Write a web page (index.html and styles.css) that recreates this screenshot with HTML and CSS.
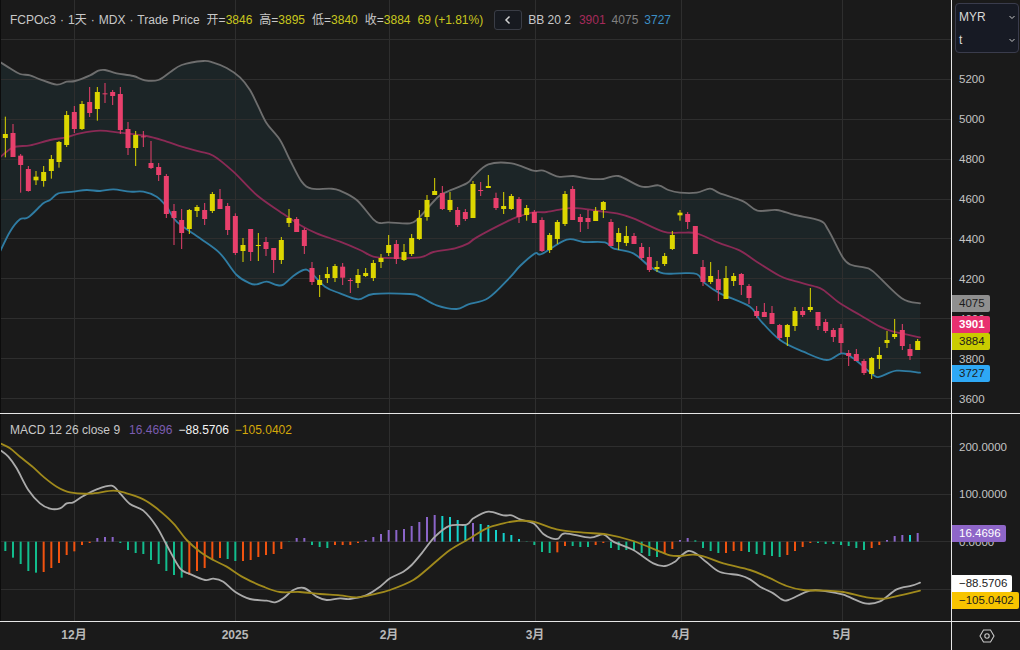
FILE: index.html
```html
<!DOCTYPE html>
<html lang="zh">
<head>
<meta charset="utf-8">
<title>FCPOc3</title>
<link rel="stylesheet" href="styles.css">
</head>
<body>
<div class="app">
  <section class="pane pane-main">
    <svg id="mainChart" class="plot" viewBox="0 0 2853 1239"></svg>
    <div class="legend">
      <span class="name wide">FCPOc3 · 1天 · MDX · Trade Price</span>
      <span class="kv"><span>开=</span><b class="up">3846</b></span>
      <span class="kv"><span>高=</span><b class="up">3895</b></span>
      <span class="kv"><span>低=</span><b class="up">3840</b></span>
      <span class="kv"><span>收=</span><b class="up">3884</b></span>
      <span class="up change">69 (+1.81%)</span>
      <button class="collapse" type="button" aria-label="折叠">
        <svg viewBox="0 0 10 10" width="10" height="10"><polyline points="6.5,1.5 3,5 6.5,8.5"/></svg>
      </button>
      <span class="name bb">BB 20 2</span>
      <span class="bb-mid">3901</span>
      <span class="bb-up">4075</span>
      <span class="bb-low">3727</span>
    </div>
  </section>
  <aside class="axis axis-main">
    <div class="selector">
      <div class="sel-row"><span>MYR</span><svg viewBox="0 0 8 8" width="8" height="8"><polyline points="1.5,3 4,5.5 6.5,3"/></svg></div>
      <div class="sel-row"><span>t</span><svg viewBox="0 0 8 8" width="8" height="8"><polyline points="1.5,3 4,5.5 6.5,3"/></svg></div>
    </div>
    <span class="tick" style="top:79px">5200</span>
    <span class="tick" style="top:119px">5000</span>
    <span class="tick" style="top:159px">4800</span>
    <span class="tick" style="top:199px">4600</span>
    <span class="tick" style="top:239px">4400</span>
    <span class="tick" style="top:279px">4200</span>
    <span class="tick" style="top:319px">4000</span>
    <span class="tick" style="top:359px">3800</span>
    <span class="tick" style="top:399px">3600</span>
    <span class="tag tag-gray" style="top:295px">4075</span>
    <span class="tag tag-pink" style="top:316px">3901</span>
    <span class="tag tag-lime" style="top:333px">3884</span>
    <span class="tag tag-blue" style="top:365px">3727</span>
  </aside>
  <section class="pane pane-macd">
    <svg id="macdChart" class="plot" viewBox="0 12 2853 621"></svg>
    <div class="legend legend-macd">
      <span class="name">MACD 12 26 close 9</span>
      <span class="m-hist">16.4696</span>
      <span class="m-line">−88.5706</span>
      <span class="m-sig">−105.0402</span>
    </div>
  </section>
  <aside class="axis axis-macd">
    <span class="tick" style="top:33px">200.0000</span>
    <span class="tick" style="top:80px">100.0000</span>
    <span class="tick" style="top:128px">0.0000</span>
    <span class="tag tag-purple" style="top:111px">16.4696</span>
    <span class="tag tag-white" style="top:161px">−88.5706</span>
    <span class="tag tag-amber" style="top:178px">−105.0402</span>
  </aside>
  <footer class="time">
    <span class="date" style="left:74px">12月</span>
    <span class="date" style="left:235px">2025</span>
    <span class="date" style="left:389px">2月</span>
    <span class="date" style="left:535px">3月</span>
    <span class="date" style="left:681px">4月</span>
    <span class="date" style="left:842px">5月</span>
  </footer>
  <div class="corner">
    <svg viewBox="0 0 16 14" width="16" height="14"><polygon points="1,7 4.5,1 11.5,1 15,7 11.5,13 4.5,13"/><circle cx="8" cy="7" r="2.2"/></svg>
  </div>
</div>
<script src="chart.js"></script>
</body>
</html>
```
FILE: styles.css
```css
* { box-sizing: border-box; }
html, body { margin: 0; height: 100%; background: #1a1a1a; overflow: hidden; }
body { font: 12px "Liberation Sans", "Noto Sans CJK SC", sans-serif; color: #c8c8c8; }
.app {
  display: grid;
  grid-template-columns: 952px 68px;
  grid-template-rows: 414px 208px 28px;
  width: 1020px;
  height: 650px;
}
.pane { position: relative; border-right: 1px solid #e6e6e6; border-bottom: 1px solid #e6e6e6; }
.plot { display: block; width: 951px; height: 100%; }
.axis { position: relative; border-bottom: 1px solid #e6e6e6; }
.tick {
  position: absolute; left: 7px;
  transform: translateY(-50%);
  font-size: 11.5px; line-height: 14px; color: #c4c4c4;
}
.tag {
  position: absolute; left: 0;
  height: 17px; line-height: 17px;
  padding: 0 5px 0 7px;
  border-radius: 0 2px 2px 0;
  font-size: 11.5px; color: #1c1c1c;
}
.tag-gray { background: #8f8f8f; width: 38px; }
.tag-pink { background: #e8306f; width: 38px; color: #fff; font-weight: 700; }
.tag-lime { background: #c9cc00; width: 38px; }
.tag-blue { background: #2ea8f5; width: 38px; }
.tag-purple { background: #8e66c8; color: #fff; }
.tag-white { background: #fff; }
.tag-amber { background: #f7c400; }
.selector {
  position: absolute; left: 3px; top: 3px;
  width: 64px; height: 50px;
  padding: 1px 2px 1px 3px;
  border: 1px solid #3a3c4c; border-radius: 4px;
  background: #171a24;
  display: flex; flex-direction: column; justify-content: space-around;
  color: #d8d8d8;
}
.sel-row { display: flex; align-items: center; justify-content: space-between; }
.sel-row svg polyline { fill: none; stroke: #c8c8c8; stroke-width: 1; }
.legend {
  position: absolute; left: 10px; top: 11px;
  display: flex; align-items: center; gap: 7px;
  height: 18px; white-space: nowrap;
  line-height: 18px;
}
.legend-macd { top: 7px; gap: 6px; }
.name.wide { word-spacing: 0.7px; }
.kv { display: flex; }
.kv b { font-weight: 400; }
.up { color: #c9c71e; }
.collapse {
  width: 28px; height: 20px; padding: 0;
  margin: 0 -1px 0 4px;
  display: flex; align-items: center; justify-content: center;
  background: #171a20; border: 1px solid #3a3d46; border-radius: 3px;
}
.collapse polyline { fill: none; stroke: #d0d0d0; stroke-width: 1.5; }
.bb-mid { color: #a62a5a; margin-left: 1px; }
.bb-up { color: #808080; margin-left: -1px; }
.bb-low { color: #3c8fc4; margin-left: -1px; }
.m-hist { color: #7a5cb0; margin-left: 3px; }
.m-line { color: #f4f4f4; }
.m-sig { color: #d4a80a; }
.time { position: relative; border-right: 1px solid #e6e6e6; }
.date { position: absolute; top: 13px; transform: translate(-50%, -50%); line-height: 16px; font-weight: 700; color: #b8b8b8; }
.corner { display: flex; align-items: center; justify-content: center; padding-left: 2px; }
.corner svg * { fill: none; stroke: #c8c8c8; stroke-width: 1.1; }
.grid { stroke: #2e2e2e; stroke-width: 3; fill: none; }
.band { fill: #1c2527; stroke: none; }
.edge { fill: #0c0c0c; }
.ln { fill: none; stroke-width: 5.5; stroke-linejoin: round; stroke-linecap: round; }
.ln-up { stroke: #6e6e6e; }
.ln-mid { stroke: #8a2a55; }
.ln-low { stroke: #2f7ca3; }
.ln-macd { stroke: #ababab; }
.ln-sig { stroke: #a08a1c; }
```
FILE: chart.js
```js
// All chart coordinates are in thirds of a pixel.
const NS = "http://www.w3.org/2000/svg";
const R = "#e8406c", Y = "#dcd600";
const candles = [
[Y,402,414,350,472],[R,399,471,372,471],[R,467,495,462,578],[R,507,573,498,575],[Y,530,541,513,555],[Y,516,543,498,560],[Y,477,513,465,536],[Y,426,486,423,503],[Y,345,435,333,441],[R,336,387,318,399],
[Y,312,387,303,390],[R,306,339,261,351],[Y,276,327,261,362],[R,280,282,249,309],[R,276,288,270,315],[R,282,390,261,402],[R,387,444,366,465],[Y,405,444,393,498],[R,409,411,393,441],[R,489,504,423,507],
[R,501,525,489,543],[R,528,642,522,654],[R,633,654,612,735],[R,660,699,627,747],[Y,630,687,627,702],[Y,621,633,615,651],[R,630,657,609,675],[Y,582,633,576,639],[R,597,627,567,627],[R,618,690,609,705],
[R,648,759,640,765],[Y,735,753,714,786],[R,687,756,687,783],[Y,735,737,699,783],[R,726,747,711,768],[R,744,780,744,819],[Y,720,780,711,792],[Y,654,669,627,681],[R,657,696,651,696],[R,690,738,684,762],
[R,804,846,786,855],[Y,840,855,825,891],[Y,822,834,801,849],[Y,798,834,792,846],[R,800,833,789,855],[R,840,842,834,879],[Y,825,849,807,864],[Y,819,828,804,831],[Y,789,834,780,843],[Y,774,786,762,804],
[Y,735,759,705,768],[R,732,777,720,792],[Y,756,780,732,783],[Y,714,762,702,768],[Y,654,717,630,720],[Y,600,651,585,662],[Y,573,585,534,585],[R,579,627,558,630],[Y,600,630,576,636],[R,630,675,621,681],
[R,636,657,627,663],[Y,552,654,543,654],[R,570,572,546,588],[Y,558,564,525,564],[R,594,624,578,630],[Y,618,627,576,642],[Y,588,627,582,630],[R,597,651,591,669],[Y,624,645,615,662],[R,636,669,630,669],
[R,660,753,652,756],[Y,705,750,699,759],[Y,666,717,660,732],[Y,582,672,573,678],[R,567,660,558,660],[R,651,666,642,696],[R,654,666,630,687],[Y,633,663,621,663],[Y,606,630,603,654],[R,666,738,657,738],
[Y,699,726,684,750],[Y,708,729,678,738],[R,708,732,699,732],[R,741,774,729,780],[R,771,810,741,816],[Y,801,807,783,816],[Y,768,792,759,798],[Y,705,747,693,750],[Y,638,646,630,662],[R,642,666,636,687],
[R,678,762,678,762],[R,801,846,780,858],[Y,828,846,786,852],[R,837,870,810,903],[Y,834,897,798,897],[Y,828,843,819,858],[R,822,855,819,885],[R,858,894,852,912],[R,933,948,918,954],[R,936,951,909,951],
[R,939,972,918,972],[R,975,1014,972,1020],[Y,975,1011,972,1038],[Y,933,978,921,993],[R,933,945,921,951],[Y,921,930,864,936],[R,936,978,936,990],[R,966,993,957,999],[R,990,1011,984,1026],[R,984,1029,972,1059],
[R,1059,1068,1050,1098],[R,1062,1083,1047,1083],[R,1083,1119,1077,1125],[Y,1074,1122,1071,1137],[Y,1065,1077,1041,1107],[Y,1020,1029,993,1044],[Y,1002,1011,957,1017],[R,990,1038,972,1050],[R,1047,1068,1032,1080],[Y,1023,1050,1017,1050]
];
const upper = [[0,186],[30,205],[60,222],[90,226],[120,238],[170,254],[200,245],[225,243],[270,226],[295,212],[315,210],[350,220],[400,228],[435,241],[475,240],[510,217],[545,195],[610,183],[640,188],[680,204],[720,232],[750,270],[775,320],[800,370],[840,420],[870,480],[905,545],[935,566],[990,566],[1020,572],[1070,600],[1120,658],[1140,669],[1165,667],[1230,670],[1255,655],[1305,600],[1330,580],[1400,550],[1420,530],[1465,493],[1535,490],[1600,512],[1630,512],[1675,530],[1720,528],[1765,536],[1810,537],[1855,528],[1925,560],[1975,556],[2005,570],[2040,578],[2090,578],[2130,566],[2160,580],[2230,604],[2272,632],[2330,630],[2385,645],[2460,662],[2485,690],[2530,775],[2555,795],[2595,803],[2620,815],[2705,895],[2760,910]];
const middle = [[0,472],[40,442],[90,436],[150,420],[200,412],[240,400],[300,392],[360,398],[440,408],[500,425],[545,440],[600,455],[640,467],[700,515],[770,585],[840,635],[900,675],[950,700],[1020,725],[1080,750],[1120,770],[1170,774],[1260,772],[1300,756],[1365,745],[1405,730],[1430,712],[1520,665],[1560,648],[1600,637],[1640,636],[1700,625],[1740,625],[1810,635],[1850,640],[1900,655],[1990,695],[2040,698],[2090,700],[2155,728],[2220,752],[2270,785],[2340,828],[2380,842],[2440,858],[2470,870],[2520,910],[2580,945],[2640,980],[2680,995],[2760,1012]];
const lower = [[0,755],[30,695],[60,658],[85,652],[130,610],[150,600],[175,580],[220,575],[260,570],[300,573],[340,568],[390,575],[430,575],[470,590],[500,620],[530,665],[600,715],[660,760],[710,825],[750,850],[770,853],[800,845],[830,855],[850,854],[880,828],[910,810],[930,815],[975,860],[1020,880],[1075,898],[1120,882],[1230,882],[1260,890],[1310,916],[1370,927],[1405,913],[1465,894],[1530,832],[1560,798],[1605,760],[1625,762],[1700,719],[1750,726],[1815,727],[1840,745],[1900,760],[1950,800],[1990,820],[2040,820],[2090,822],[2115,850],[2160,880],[2250,920],[2280,960],[2340,1020],[2410,1055],[2480,1080],[2525,1060],[2560,1075],[2620,1125],[2640,1130],[2690,1112],[2760,1118]];
const signal = [[0,100],[30,115],[60,140],[100,172],[130,200],[170,230],[210,247],[270,251],[340,242],[380,250],[430,268],[470,295],[520,340],[560,390],[600,425],[640,450],[680,470],[730,502],[790,530],[840,546],[900,546],[960,552],[1020,556],[1070,562],[1120,553],[1170,540],[1240,510],[1290,470],[1350,420],[1410,385],[1460,355],[1510,340],[1550,333],[1600,335],[1670,358],[1750,368],[1820,373],[1900,393],[1980,425],[2010,436],[2040,438],[2080,434],[2120,442],[2170,460],[2250,480],[2300,500],[2360,528],[2410,540],[2480,542],[2530,546],[2600,562],[2650,566],[2700,556],[2760,542]];
const macd = [[0,120],[25,140],[50,175],[85,240],[120,280],[150,296],[180,295],[200,280],[220,277],[250,258],[290,238],[335,227],[360,250],[390,282],[430,302],[470,350],[500,405],[540,475],[570,492],[615,510],[640,506],[670,515],[705,545],[750,567],[800,572],[825,577],[850,565],[880,540],[912,534],[950,560],[980,570],[1020,565],[1050,567],[1100,555],[1140,530],[1170,505],[1210,485],[1235,465],[1265,430],[1305,380],[1350,347],[1400,344],[1420,325],[1465,305],[1510,316],[1535,316],[1560,328],[1600,340],[1630,372],[1655,385],[1675,386],[1695,370],[1770,383],[1810,373],[1840,395],[1900,420],[1960,460],[1995,468],[2025,455],[2040,440],[2065,423],[2090,432],[2120,457],[2160,486],[2220,496],[2250,508],[2280,530],[2320,550],[2345,568],[2365,570],[2430,542],[2480,544],[2530,554],[2595,580],[2640,574],[2690,538],[2735,527],[2760,518]];
const G = "#12bd8d", O = "#f2530f", P = "#8b65c9", C = "#14d2cc";
const histogram = [
[G,423],[G,443],[G,462],[G,483],[G,488],[O,486],[O,474],[O,459],[O,435],[O,424],[O,405],[O,399],[P,384],[P,381],[P,381],[G,399],[G,420],[G,429],[G,432],[G,450],
[G,462],[G,483],[G,495],[G,503],[O,495],[O,483],[O,474],[O,450],[O,444],[G,447],[G,453],[O,453],[O,450],[O,441],[O,435],[O,432],[O,417],[G,396],[P,384],[P,384],
[G,405],[G,411],[G,414],[O,405],[O,405],[O,405],[O,399],[P,390],[P,381],[P,372],[P,360],[P,360],[P,357],[P,348],[P,336],[P,321],[P,315],[C,318],[C,321],[C,330],
[C,345],[P,339],[C,342],[C,345],[C,360],[C,369],[C,375],[C,387],[G,394],[G,405],[G,426],[G,429],[O,427],[O,408],[G,408],[G,411],[G,411],[O,405],[O,399],[G,414],
[G,420],[G,420],[G,423],[G,429],[G,438],[G,441],[O,432],[O,417],[P,390],[P,384],[G,391],[G,414],[G,423],[G,429],[O,429],[O,423],[O,423],[G,426],[G,432],[G,435],
[G,438],[G,441],[O,435],[O,423],[O,411],[O,399],[G,399],[G,402],[G,402],[G,405],[G,408],[G,414],[G,420],[O,414],[O,405],[P,390],[P,378],[P,375],[C,375],[P,369]
];
const X = i => 16 + 23 * i;
const snap = v => Math.floor(v / 3) * 3 + 1.5;
const pts = a => a.map(p => p.join(",")).join(" ");

// Catmull-Rom curve through the sampled points, so the lines read smooth.
function curve(a) {
  let d = "M" + a[0].join(",");
  for (let i = 0; i < a.length - 1; i++) {
    const p0 = a[Math.max(i - 1, 0)], p1 = a[i], p2 = a[i + 1], p3 = a[Math.min(i + 2, a.length - 1)];
    const c1 = [p1[0] + (p2[0] - p0[0]) / 6, p1[1] + (p2[1] - p0[1]) / 6];
    const c2 = [p2[0] - (p3[0] - p1[0]) / 6, p2[1] - (p3[1] - p1[1]) / 6];
    d += " C" + c1.map(v => v.toFixed(1)) + " " + c2.map(v => v.toFixed(1)) + " " + p2.join(",");
  }
  return d;
}

function el(svg, tag, attrs) {
  const e = document.createElementNS(NS, tag);
  for (const k in attrs) e.setAttribute(k, attrs[k]);
  svg.appendChild(e);
  return e;
}
function grid(svg, ys, y0, y1) {
  ys.forEach(y => el(svg, "line", { class: "grid", x1: 0, x2: 2853, y1: snap(y), y2: snap(y) }));
  [223, 706, 1168, 1606, 2044, 2527].forEach(x => el(svg, "line", { class: "grid", x1: snap(x), x2: snap(x), y1: y0, y2: y1 }));
}

const main = document.getElementById("mainChart");
el(main, "polygon", { class: "band", points: pts(upper.concat(lower.slice().reverse())) });
grid(main, [118, 238, 358, 478, 598, 715, 835, 955, 1075, 1195], 0, 1239);
["up", "mid", "low"].forEach((n, i) => el(main, "path", { class: "ln ln-" + n, d: curve([upper, middle, lower][i]) }));
candles.forEach((c, i) => {
  const x = X(i);
  el(main, "rect", { x: x - 1.5, y: c[3], width: 3, height: c[4] - c[3], fill: c[0] });
  el(main, "rect", { x: x - 7.5, y: c[1], width: 15, height: Math.max(3, c[2] - c[1]), fill: c[0] });
});
el(main, "rect", { class: "edge", x: 0, y: 0, width: 3, height: 1239 });

const sub = document.getElementById("macdChart");
grid(sub, [110, 253, 395, 538], 12, 633);
histogram.forEach((b, i) => {
  const top = Math.min(b[1], 395), bot = Math.max(b[1], 395);
  el(sub, "rect", { x: X(i) - 3, y: top, width: 6, height: bot - top, fill: b[0] });
});
el(sub, "path", { class: "ln ln-macd", d: curve(macd) });
el(sub, "path", { class: "ln ln-sig", d: curve(signal) });
el(sub, "rect", { class: "edge", x: 0, y: 12, width: 3, height: 621 });
```
